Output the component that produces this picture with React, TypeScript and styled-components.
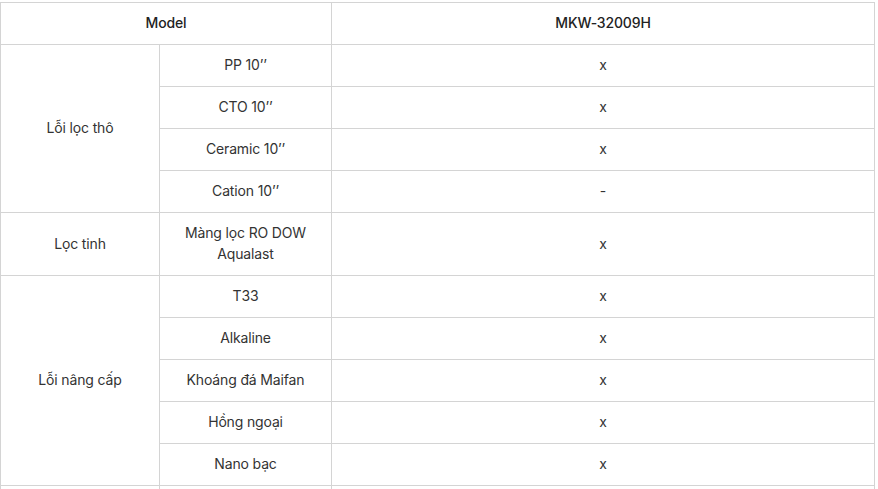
import React from "react";
import styled, { createGlobalStyle } from "styled-components";

const GlobalStyle = createGlobalStyle`
  html, body {
    margin: 0;
    padding: 0;
    background: #fff;
  }
  body {
    font-family: Inter, "Noto Sans", "Liberation Sans", sans-serif;
    color: #333;
  }
`;

const Wrapper = styled.div`
  padding-top: 2px;
`;

const SpecTable = styled.table`
  width: 875px;
  border-collapse: collapse;
  table-layout: fixed;
  font-size: 14px;
  line-height: 21px;
  letter-spacing: -0.15px;
`;

const Cell = styled.td<{ $head?: boolean }>`
  border: 1px solid #d4d4d4;
  padding: 9px 10px 11px;
  text-align: center;
  vertical-align: middle;
  font-weight: ${(p) => (p.$head ? 500 : 400)};
  color: ${(p) => (p.$head ? "#222" : "#333")};
`;

interface Group {
  name: string;
  items: { label: string; value: string }[];
}

const groups: Group[] = [
  {
    name: "Lỗi lọc thô",
    items: [
      { label: "PP 10’’", value: "x" },
      { label: "CTO 10’’", value: "x" },
      { label: "Ceramic 10’’", value: "x" },
      { label: "Cation 10’’", value: "-" },
    ],
  },
  {
    name: "Lọc tinh",
    items: [{ label: "Màng lọc RO DOW Aqualast", value: "x" }],
  },
  {
    name: "Lỗi nâng cấp",
    items: [
      { label: "T33", value: "x" },
      { label: "Alkaline", value: "x" },
      { label: "Khoáng đá Maifan", value: "x" },
      { label: "Hồng ngoại", value: "x" },
      { label: "Nano bạc", value: "x" },
    ],
  },
];

export default function App() {
  return (
    <>
      <GlobalStyle />
      <Wrapper>
        <SpecTable>
          <colgroup>
            <col style={{ width: 159 }} />
            <col style={{ width: 172 }} />
            <col />
          </colgroup>
          <tbody>
            <tr>
              <Cell $head colSpan={2}>
                Model
              </Cell>
              <Cell $head>MKW-32009H</Cell>
            </tr>
            {groups.map((g) =>
              g.items.map((it, i) => (
                <tr key={g.name + it.label}>
                  {i === 0 && <Cell rowSpan={g.items.length}>{g.name}</Cell>}
                  <Cell>{it.label}</Cell>
                  <Cell>{it.value}</Cell>
                </tr>
              ))
            )}
            <tr>
              <Cell>&nbsp;</Cell>
              <Cell>&nbsp;</Cell>
              <Cell>&nbsp;</Cell>
            </tr>
          </tbody>
        </SpecTable>
      </Wrapper>
    </>
  );
}
